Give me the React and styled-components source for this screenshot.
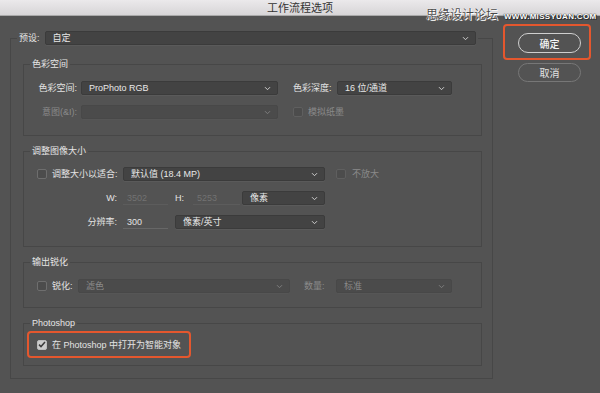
import React from "react";
import styled, { createGlobalStyle } from "styled-components";

const GlobalStyle = createGlobalStyle`
  html, body {
    margin: 0;
    padding: 0;
    background: #535353;
  }
  * {
    box-sizing: border-box;
  }
`;

const Window = styled.div`
  width: 600px;
  height: 393px;
  position: relative;
  overflow: hidden;
  background: #535353;
  font-family: "Liberation Sans", "Noto Sans CJK SC", sans-serif;
  font-size: 9px;
  color: #e3e3e3;
`;

const TitleBar = styled.div`
  height: 16px;
  display: flex;
  align-items: center;
  justify-content: center;
  background: linear-gradient(#ebe9eb, #d7d5d7);
  border-bottom: 1px solid #a9a9a9;
  color: #333;
  font-size: 11px;
  line-height: 16px;
`;

const Watermark = styled.div`
  position: absolute;
  left: 426px;
  top: 6px;
  display: flex;
  align-items: baseline;
  gap: 6px;
  pointer-events: none;
`;

const MarkCn = styled.span`
  font-family: "Noto Sans CJK SC", sans-serif;
  font-size: 12px;
  line-height: 15px;
  color: #4a4a4a;
  text-shadow: 0 0 1px #fff, 0 0 1px #fff, 1px 1px 0 #fff;
`;

const MarkUrl = styled.span`
  font-family: "Liberation Sans", sans-serif;
  font-size: 8px;
  font-weight: bold;
  letter-spacing: 0.3px;
  color: #fff;
  text-shadow: 0 0 1px #222, 0 0 1px #222, 1px 1px 0 #333;
`;

const Main = styled.div`
  display: flex;
  align-items: flex-start;
  padding-left: 10px;
`;

const OuterSet = styled.fieldset`
  margin: 15px 0 0 0;
  padding: 0;
  min-width: 0;
  width: 483px;
  border: 1px solid #474747;
`;

const Legend = styled.legend`
  margin-left: 6px;
  padding: 0 2px;
  font-size: 9px;
  line-height: 12px;
  color: #e6e6e6;
`;

const PresetLine = styled.div`
  display: flex;
  align-items: center;
  height: 14px;
`;

const OuterBody = styled.div`
  display: flex;
  flex-direction: column;
  gap: 9px;
  padding: 13px 10px 12px 12px;
`;

const Group = styled.fieldset`
  margin: 0;
  padding: 0;
  min-width: 0;
  border: 1px solid #474747;
`;

const GroupBody = styled.div`
  display: flex;
  flex-direction: column;
  gap: 10px;
  padding: ${(p) => p.$pad};
`;

const Row = styled.div`
  display: flex;
  align-items: center;
  height: 14px;
  padding-left: ${(p) => p.$indent || 0}px;
`;

const Label = styled.span`
  flex-shrink: 0;
  white-space: nowrap;
  width: ${(p) => (p.$w ? `${p.$w}px` : "auto")};
  margin-left: ${(p) => p.$ml || 0}px;
  text-align: ${(p) => (p.$right ? "right" : "left")};
  color: ${(p) => (p.$dim ? "#8a8a8a" : "#e3e3e3")};
  line-height: 14px;
`;

const SelectBox = styled.div`
  flex-shrink: 0;
  display: flex;
  align-items: center;
  justify-content: space-between;
  width: ${(p) => p.$w}px;
  height: 14px;
  margin-left: ${(p) => p.$ml || 0}px;
  padding: 0 6px 0 7px;
  border-radius: 2px;
  background: ${(p) => (p.$off ? "#4b4b4b" : "#434343")};
  border: 1px solid ${(p) => (p.$off ? "#484848" : "#3b3b3b")};
  box-shadow: 0 1px 0 ${(p) => (p.$off ? "#565656" : "#5a5a5a")};
  color: ${(p) => (p.$off ? "#8a8a8a" : "#e8e8e8")};
  line-height: 12px;
`;

const Chevron = styled.svg`
  flex-shrink: 0;
  stroke: ${(p) => (p.$off ? "#7e7e7e" : "#cfcfcf")};
`;

const Field = styled.div`
  flex-shrink: 0;
  width: ${(p) => p.$w}px;
  height: 14px;
  margin-left: ${(p) => p.$ml || 0}px;
  padding-left: 4px;
  border-bottom: 1px solid ${(p) => (p.$off ? "#5c5c5c" : "#676767")};
  color: ${(p) => (p.$off ? "#727272" : "#e3e3e3")};
  line-height: 14px;
`;

const Box = styled.span`
  flex-shrink: 0;
  display: flex;
  align-items: center;
  justify-content: center;
  width: 10px;
  height: 10px;
  margin-left: ${(p) => p.$ml || 0}px;
  border-radius: 2px;
  border: 1px solid ${(p) => (p.$on ? "#bdbdbd" : p.$off ? "#5f5f5f" : "#6e6e6e")};
  background: ${(p) => (p.$on ? "#cdcdcd" : "#4c4c4c")};
`;

const Mark = styled.span`
  display: flex;
  align-items: center;
  width: ${(p) => p.$w}px;
  height: 27px;
  margin-left: ${(p) => p.$ml || 0}px;
  padding-left: 8px;
  border: 2px solid #e4572e;
  border-radius: 4px;
`;

const Side = styled.div`
  display: flex;
  flex-direction: column;
  align-items: flex-start;
  margin-left: 10px;
  padding-top: 8px;
`;

const ButtonMark = styled.div`
  padding: 7px 8px 5px 13px;
  border: 2px solid #e4572e;
  border-radius: 4px;
`;

const Button = styled.div`
  display: flex;
  align-items: center;
  justify-content: center;
  width: 63px;
  height: ${(p) => (p.$primary ? 20 : 19)}px;
  margin-top: ${(p) => (p.$primary ? 0 : 3)}px;
  margin-left: ${(p) => (p.$primary ? 0 : 15)}px;
  border-radius: 10px;
  border: 1px solid ${(p) => (p.$primary ? "#cfcfcf" : "#777")};
  font-family: "Noto Sans CJK SC", sans-serif;
  font-size: 10px;
  font-weight: ${(p) => (p.$primary ? 500 : 400)};
  color: ${(p) => (p.$primary ? "#f4f4f4" : "#e2e2e2")};
`;

function Select({ w, ml, off, children }) {
  return (
    <SelectBox $w={w} $ml={ml} $off={off}>
      <span>{children}</span>
      <Chevron $off={off} width="7" height="5" viewBox="0 0 7 5" fill="none" strokeWidth="1">
        <path d="M1 1.2 L3.5 3.7 L6 1.2" />
      </Chevron>
    </SelectBox>
  );
}

function Check({ on, off, ml }) {
  return (
    <Box $on={on} $off={off} $ml={ml}>
      {on && (
        <svg width="8" height="7" viewBox="0 0 8 7" fill="none">
          <path d="M1 3.6 L3 5.6 L7 1" stroke="#3c3c3c" strokeWidth="1.5" />
        </svg>
      )}
    </Box>
  );
}

export default function App() {
  return (
    <Window>
      <GlobalStyle />
      <TitleBar>工作流程选项</TitleBar>
      <Watermark>
        <MarkCn>思缘设计论坛</MarkCn>
        <MarkUrl>WWW.MISSYUAN.COM</MarkUrl>
      </Watermark>
      <Main>
        <OuterSet>
          <Legend>
            <PresetLine>
              <Label>预设:</Label>
              <Select w={431} ml={5}>自定</Select>
            </PresetLine>
          </Legend>
          <OuterBody>
            <Group>
              <Legend>色彩空间</Legend>
              <GroupBody $pad="11px 0 16px 0">
                <Row>
                  <Label $w={53} $right>色彩空间:</Label>
                  <Select w={197} ml={4}>ProPhoto RGB</Select>
                  <Label $w={39} $ml={15}>色彩深度:</Label>
                  <Select w={115} ml={5}>16 位/通道</Select>
                </Row>
                <Row>
                  <Label $w={53} $right $dim>意图(&amp;I):</Label>
                  <Select w={197} ml={4} off />
                  <Check off ml={15} />
                  <Label $ml={5} $dim>模拟纸墨</Label>
                </Row>
              </GroupBody>
            </Group>

            <Group>
              <Legend>调整图像大小</Legend>
              <GroupBody $pad="10px 0 17px 0">
                <Row $indent={13}>
                  <Check />
                  <Label $w={65} $ml={5}>调整大小以适合:</Label>
                  <Select w={202} ml={6}>默认值 (18.4 MP)</Select>
                  <Check off ml={11} />
                  <Label $ml={6} $dim>不放大</Label>
                </Row>
                <Row>
                  <Label $w={93} $right>W:</Label>
                  <Field $w={45} $ml={6} $off>3502</Field>
                  <Label $w={11} $ml={7}>H:</Label>
                  <Field $w={47} $ml={7} $off>5253</Field>
                  <Select w={83} ml={2}>像素</Select>
                </Row>
                <Row>
                  <Label $w={93} $right>分辨率:</Label>
                  <Field $w={45} $ml={6}>300</Field>
                  <Select w={150} ml={7}>像素/英寸</Select>
                </Row>
              </GroupBody>
            </Group>

            <Group>
              <Legend>输出锐化</Legend>
              <GroupBody $pad="11px 0 14px 0">
                <Row $indent={13}>
                  <Check />
                  <Label $w={21} $ml={5}>锐化:</Label>
                  <Select w={212} ml={5} off>滤色</Select>
                  <Label $w={22} $ml={14} $dim>数量:</Label>
                  <Select w={116} ml={10} off>标准</Select>
                </Row>
              </GroupBody>
            </Group>

            <Group>
              <Legend>Photoshop</Legend>
              <GroupBody $pad="2px 0 7px 0">
                <Row $indent={0} style={{ height: 27 }}>
                  <Mark $w={164} $ml={3}>
                    <Check on />
                    <Label $ml={5}>在 Photoshop 中打开为智能对象</Label>
                  </Mark>
                </Row>
              </GroupBody>
            </Group>
          </OuterBody>
        </OuterSet>

        <Side>
          <ButtonMark>
            <Button $primary>确定</Button>
          </ButtonMark>
          <Button>取消</Button>
        </Side>
      </Main>
    </Window>
  );
}
